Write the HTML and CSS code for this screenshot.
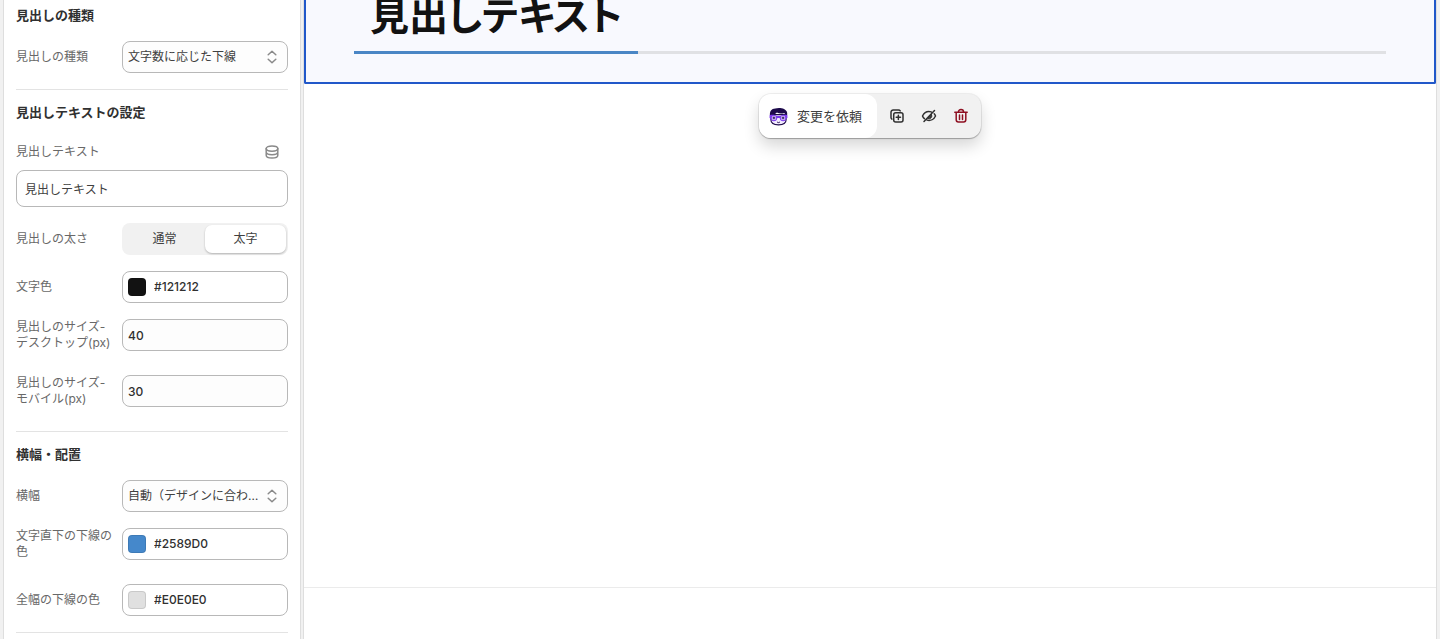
FILE: index.html
```html
<!DOCTYPE html>
<html lang="ja">
<head>
    <meta charset="UTF-8">
    <meta name="viewport" content="width=device-width, initial-scale=1.0">
    <title>見出しの設定</title>
    <link rel="stylesheet" href="styles.css">
</head>
<body>
    <div class="editor">
        <aside class="settings">
            <section class="group">
                <h2 class="group-title">見出しの種類</h2>
                <div class="field">
                    <label for="headingType">見出しの種類</label>
                    <div class="select-box">
                        <select id="headingType">
                            <option>文字数に応じた下線</option>
                        </select>
                        <svg class="chevrons" viewBox="0 0 16 16"><path d="M4.2 5.8 8 2.2l3.8 3.6M4.2 10.2 8 13.8l3.8-3.6"/></svg>
                    </div>
                </div>
            </section>

            <section class="group">
                <h2 class="group-title">見出しテキストの設定</h2>
                <div class="text-field">
                    <div class="text-field-head">
                        <label for="headingText">見出しテキスト</label>
                        <button class="source-button" type="button" aria-label="動的ソースを接続">
                            <svg viewBox="0 0 16 16">
                                <ellipse cx="8" cy="4.6" rx="5.8" ry="2.7"/>
                                <path d="M2.2 4.6v6.6c0 1.6 2.6 2.8 5.8 2.8s5.8-1.2 5.8-2.8V4.6M2.2 8c0 1.5 2.6 2.7 5.8 2.7s5.8-1.2 5.8-2.7"/>
                            </svg>
                        </button>
                    </div>
                    <input class="text-input" id="headingText" type="text" value="見出しテキスト">
                </div>
                <div class="field">
                    <span class="field-label" id="weightLabel">見出しの太さ</span>
                    <div class="segmented" role="group" aria-labelledby="weightLabel">
                        <button type="button" aria-pressed="false">通常</button>
                        <button class="active" type="button" aria-pressed="true">太字</button>
                    </div>
                </div>
                <div class="field">
                    <label for="textColor">文字色</label>
                    <div class="color-box">
                        <button class="swatch swatch-text" type="button" aria-label="文字色を選択"></button>
                        <input id="textColor" type="text" value="#121212">
                    </div>
                </div>
                <div class="field field-tall">
                    <label for="sizeDesktop">見出しのサイズ-デスクトップ(px)</label>
                    <input class="number-input" id="sizeDesktop" type="text" inputmode="numeric" value="40">
                </div>
                <div class="field field-tall">
                    <label for="sizeMobile">見出しのサイズ-モバイル(px)</label>
                    <input class="number-input" id="sizeMobile" type="text" inputmode="numeric" value="30">
                </div>
            </section>

            <section class="group">
                <h2 class="group-title">横幅・配置</h2>
                <div class="field">
                    <label for="width">横幅</label>
                    <div class="select-box">
                        <select id="width">
                            <option>自動（デザインに合わせる）</option>
                        </select>
                        <svg class="chevrons" viewBox="0 0 16 16"><path d="M4.2 5.8 8 2.2l3.8 3.6M4.2 10.2 8 13.8l3.8-3.6"/></svg>
                    </div>
                </div>
                <div class="field field-tall">
                    <label for="lineColor">文字直下の下線の色</label>
                    <div class="color-box">
                        <button class="swatch swatch-line" type="button" aria-label="文字直下の下線の色を選択"></button>
                        <input id="lineColor" type="text" value="#2589D0">
                    </div>
                </div>
                <div class="field">
                    <label for="fullLineColor">全幅の下線の色</label>
                    <div class="color-box">
                        <button class="swatch swatch-full" type="button" aria-label="全幅の下線の色を選択"></button>
                        <input id="fullLineColor" type="text" value="#E0E0E0">
                    </div>
                </div>
            </section>
            <div class="group"></div>
        </aside>

        <main class="preview">
            <section class="selected-block">
                <div class="heading-line">
                    <h1>見出しテキスト</h1>
                </div>
            </section>
            <div class="toolbar">
                <button class="ask" type="button">
                    <svg class="avatar" viewBox="0 0 20 20">
                        <path d="M2 8v5.500C2 17.300 4.500 18.800 10 18.800s8-1.500 8-5.300V8z" fill="#f3ebff" stroke="#1d0a4b" stroke-width="1.200"/>
                        <path d="M1 9C.4 4.800 2.600 1.500 6.600 1.500 10.500.2 18 1 19 5.600c.3 1.200.3 2.300 0 3.400h-1.500l-1.300-2.800c-2.700.9-5.700.7-7.900-.4L4.500 9z" fill="#1d0a4b"/>
                        <path d="M.6 8.600c2.600-.7 5.600-.6 7.600.8h3.600c2-1.400 5-1.500 7.600-.8v3l-1 .6c-.4 2-1.600 2.900-3.500 2.900-2.100 0-3.300-1.200-3.700-3.400H8.800c-.4 2.200-1.600 3.400-3.700 3.400-1.900 0-3.100-.9-3.500-2.900l-1-.6z" fill="#7c3aed"/>
                        <circle cx="5.200" cy="11.500" r="2.400" fill="#d8c2ff"/>
                        <circle cx="14.800" cy="11.500" r="2.400" fill="#d8c2ff"/>
                        <path d="M4.200 11.500h2M5.200 10.500v2M13.800 11.500h2M14.800 10.500v2M8.700 15.900c.8.800 1.800.8 2.600 0" fill="none" stroke="#1d0a4b" stroke-width="1"/>
                    </svg>
                    変更を依頼
                </button>
                <div class="actions">
                    <button type="button" aria-label="複製">
                        <svg viewBox="0 0 16 16">
                            <rect x="4.700" y="4.700" width="9.300" height="9.300" rx="2"/>
                            <path d="M9.350 7.200v4.300M7.200 9.350h4.300M2.900 11.200A2 2 0 0 1 2 9.500V4.200A2.200 2.200 0 0 1 4.200 2h5.300a2 2 0 0 1 1.700.9"/>
                        </svg>
                    </button>
                    <button type="button" aria-label="非表示">
                        <svg viewBox="0 0 16 16">
                            <path d="M13.500 2.500 3 13.500M10.200 3.900C6.300 2.800 3 5 1.500 8c.4 1 1 1.900 1.900 2.600M13.200 5.800c.6.600 1 1.400 1.300 2.200-1.500 3.300-4.900 5.200-8.400 4.100"/>
                            <path d="M10.600 6.600A3 3 0 0 1 7 10.700z" fill="currentColor" stroke-width="1"/>
                        </svg>
                    </button>
                    <button class="delete" type="button" aria-label="削除">
                        <svg viewBox="0 0 16 16">
                            <path d="M1.800 4.200h12.400M5.400 4A2.600 2.600 0 0 1 10.600 4M3.200 4.400v7.400a2.200 2.200 0 0 0 2.200 2.200h5.200a2.200 2.200 0 0 0 2.200-2.200V4.400M6.500 7v4.400M9.500 7v4.400"/>
                        </svg>
                    </button>
                </div>
            </div>
            <div class="page-footer"></div>
        </main>
    </div>
</body>
</html>
```
FILE: styles.css
```css
* {
    box-sizing: border-box;
}
body {
    margin: 0;
    background: #f1f1f1;
    color: #303030;
    font-family: Inter, "Noto Sans CJK JP", sans-serif;
    font-size: 12px;
    line-height: 16px;
}
button, input, select {
    font: inherit;
    color: inherit;
}
button {
    padding: 0;
    border: 0;
    background: none;
    cursor: pointer;
}
svg {
    fill: none;
    stroke: currentColor;
    stroke-width: 1.5;
    stroke-linecap: round;
    stroke-linejoin: round;
}
.editor {
    display: grid;
    grid-template-columns: 298px minmax(0, 1fr);
    gap: 2px;
    height: 100vh;
    padding: 0 3px;
    overflow: hidden;
}

/* Settings panel */
.settings {
    padding: 5px 12px 0;
    background: #fff;
    border: solid #dedede;
    border-width: 0 1px;
    overflow: hidden;
}
.group {
    display: flex;
    flex-direction: column;
    gap: 16px;
    padding-bottom: 16px;
}
.group + .group {
    padding-top: 12px;
    border-top: 1px solid #e3e3e3;
}
.group-title {
    margin: 0;
    font-size: 13px;
    line-height: 20px;
    font-weight: 700;
}
.field {
    display: grid;
    grid-template-columns: 98px minmax(0, 1fr);
    gap: 8px;
    align-items: center;
}
.field-tall {
    padding-bottom: 8px;
}
.field label, .field-label, .text-field label {
    color: #686868;
}
.text-field {
    display: flex;
    flex-direction: column;
    gap: 4px;
}
.text-field-head {
    display: flex;
    align-items: center;
    justify-content: space-between;
    height: 28px;
    padding-right: 8px;
}
.source-button, .source-button svg {
    display: block;
    width: 16px;
    height: 16px;
    color: #8a8a8a;
}
.text-input, .number-input, .select-box select, .color-box {
    width: 100%;
    height: 32px;
    padding: 0 5px;
    border: 1px solid #b8b8b8;
    border-radius: 8px;
    background: #fdfdfd;
}
.text-input {
    height: 37px;
    padding: 0 8px;
    background: #fff;
}
.number-input, .color-box {
    font-weight: 450;
}
.select-box {
    position: relative;
}
.select-box select {
    display: block;
    padding-right: 28px;
    appearance: none;
    text-overflow: ellipsis;
}
.select-box select, .text-input, .segmented button, .ask {
    color: #404040;
}
.chevrons {
    position: absolute;
    top: 8px;
    right: 8px;
    width: 16px;
    height: 16px;
    color: #8a8a8a;
    pointer-events: none;
}
.segmented {
    display: grid;
    grid-template-columns: 1fr 1fr;
    height: 32px;
    padding: 2px;
    border-radius: 8px;
    background: #f1f1f1;
}
.segmented button {
    border-radius: 7px;
}
.segmented .active {
    background: #fff;
    box-shadow: 0 1px 2px rgba(0, 0, 0, 0.25);
}
.color-box {
    display: flex;
    align-items: center;
    gap: 8px;
    background: #fff;
}
.color-box input {
    flex: 1;
    min-width: 0;
    padding: 0;
    border: 0;
    background: none;
}
.swatch {
    width: 18px;
    height: 18px;
    border: 1px solid rgba(0, 0, 0, 0.1);
    border-radius: 4px;
}
.swatch-text {
    background: #121212;
}
.swatch-line {
    background: #4588cb;
}
.swatch-full {
    background: #e0e0e0;
}

/* Page preview */
.preview {
    display: flex;
    flex-direction: column;
    align-items: center;
    background: #fff;
    border: solid #dedede;
    border-width: 0 1px;
}
.selected-block {
    width: 100%;
    padding: 0 48px 28px;
    border: 2px solid #2158c9;
    border-top: 0;
    border-radius: 0 0 2px 2px;
    background: #f8f9fe;
}
.heading-line {
    border-bottom: 3px solid #e0e1e4;
}
.heading-line h1 {
    width: fit-content;
    margin: 0 0 -3px;
    padding: 0 16px 24px;
    border-bottom: 3px solid #4a86c5;
    color: #121212;
    font-family: "Noto Sans CJK JP", sans-serif;
    font-size: 39px;
    line-height: 27px;
    font-weight: 700;
    font-feature-settings: "palt";
}
.toolbar {
    display: flex;
    height: 44px;
    margin-top: 10px;
    border-radius: 12px;
    background: #f1f1f1;
    box-shadow: 0 0 0 1px rgba(0, 0, 0, 0.06), 0 1px 1px rgba(0, 0, 0, 0.25), 0 8px 16px rgba(0, 0, 0, 0.16);
}
.ask {
    display: flex;
    align-items: center;
    gap: 9px;
    padding: 0 15px 0 10px;
    border-radius: 12px;
    background: #fff;
    font-size: 13px;
}
.avatar {
    width: 19px;
    height: 19px;
    stroke: none;
}
.actions {
    display: flex;
    padding: 0 4px;
}
.actions button {
    display: flex;
    align-items: center;
    justify-content: center;
    width: 32px;
}
.actions svg {
    width: 16px;
    height: 16px;
}
.actions .delete {
    color: #8e1022;
}
.page-footer {
    width: 100%;
    height: 52px;
    margin-top: auto;
    border-top: 1px solid #ebebeb;
}
```
